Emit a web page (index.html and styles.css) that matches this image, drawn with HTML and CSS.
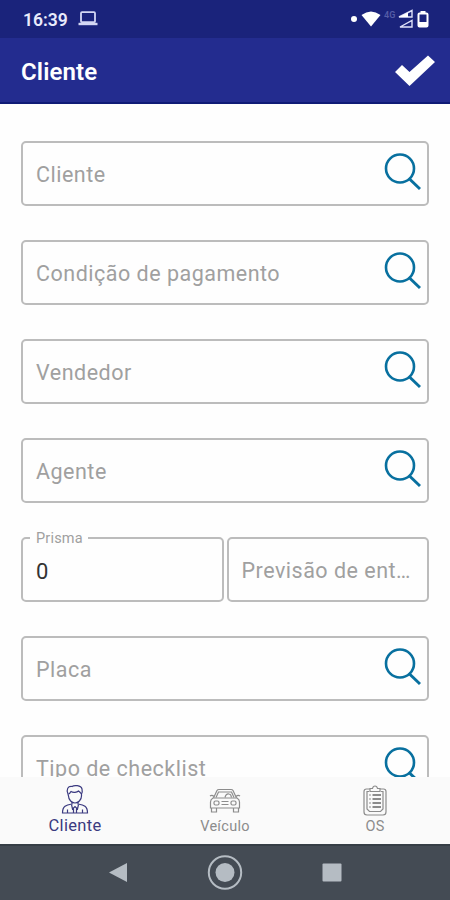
FILE: index.html
```
<!DOCTYPE html>
<html lang="pt-BR">
<head>
    <meta charset="UTF-8">
    <meta name="viewport" content="width=device-width, initial-scale=1.0">
    <title>Cliente</title>
    <link rel="stylesheet" href="styles.css">
</head>
<body>
    <svg class="symbols">
        <symbol id="search" viewBox="0 0 38 38">
            <circle cx="17" cy="15.5" r="14" fill="none" stroke="currentColor" stroke-width="2.6"/>
            <path d="M26 25.5 L37 36" stroke="currentColor" stroke-width="3"/>
        </symbol>
    </svg>

    <div class="status-bar">
        <span class="time">16:39</span>
        <svg class="laptop" width="20" height="16" viewBox="0 0 20 16">
            <rect x="3" y="1.2" width="14" height="10" rx="1" fill="none" stroke="#d3d7f4" stroke-width="1.8"/>
            <path d="M0.5 13 H19.5" stroke="#d3d7f4" stroke-width="2.4"/>
        </svg>
        <div class="signals">
            <span class="dot"></span>
            <svg class="wifi" width="20" height="16" viewBox="0 0 20 16">
                <path d="M0.5 4 Q10 -3 19.5 4 L10 15.5 Z" fill="#fff"/>
            </svg>
            <span class="network">4G</span>
            <svg class="bars" width="16" height="20" viewBox="0 0 16 20">
                <path d="M1 8 L14 1.5 V8 Z M2 18 L14 11.5 V18 Z" fill="none" stroke="#dfe2fa" stroke-width="1.4"/>
                <path d="M1 8 L10 3.5 V8 Z" fill="#fff"/>
            </svg>
            <svg class="battery" width="12" height="17" viewBox="0 0 12 17">
                <rect x="1.5" y="2.5" width="9" height="13" rx="1" fill="none" stroke="#fff" stroke-width="2"/>
                <path d="M3.5 1.2 H8.5" stroke="#fff" stroke-width="2.4"/>
                <path d="M2 13 H10" stroke="#fff" stroke-width="4"/>
            </svg>
        </div>
    </div>

    <header class="app-bar">
        <h1>Cliente</h1>
        <svg class="check" width="42" height="32" viewBox="0 0 42 32">
            <path d="M1 17 L8 10 L15.5 17 L34 0.5 L41 7 L15.5 31 Z" fill="#fff"/>
        </svg>
    </header>

    <main class="form">
        <div class="field">
            <span class="label">Cliente</span>
            <svg class="search"><use href="#search"/></svg>
        </div>
        <div class="field">
            <span class="label">Condição de pagamento</span>
            <svg class="search"><use href="#search"/></svg>
        </div>
        <div class="field">
            <span class="label">Vendedor</span>
            <svg class="search"><use href="#search"/></svg>
        </div>
        <div class="field">
            <span class="label">Agente</span>
            <svg class="search"><use href="#search"/></svg>
        </div>
        <div class="row">
            <div class="field">
                <span class="floating">Prisma</span>
                <span class="value">0</span>
            </div>
            <div class="field">
                <span class="label">Previsão de ent…</span>
            </div>
        </div>
        <div class="field">
            <span class="label">Placa</span>
            <svg class="search"><use href="#search"/></svg>
        </div>
        <div class="field">
            <span class="label">Tipo de checklist</span>
            <svg class="search"><use href="#search"/></svg>
        </div>
    </main>

    <nav class="tabs">
        <div class="tab active">
            <svg width="28" height="32" viewBox="0 0 28 32">
                <path d="M7 10 C5 5 7 2 11 2.5 C13 1 20 1 21 5 C21.5 7 21 9 20.5 10 V12 C20.5 16 17 19 14 19 C11 19 7.5 16 7.5 12 Z"/>
                <path d="M7.5 10 C9.5 9.5 9 8 10 7.5 C12 9 16 8.5 17.5 7 Q19 8 20.5 10"/>
                <path d="M11 18 V20.5 M17 18 V20.5 M11 20 C5 21 1.5 22 1.5 29 H26.5 C26.5 22 23 21 17 20 M6.5 25.5 V29 M21.5 25.5 V29"/>
                <path d="M10.5 20.5 L11.5 25 L14 22.5 L16.5 25 L17.5 20.5 M12.5 24.5 V29 M15.5 24.5 V29"/>
            </svg>
            <span>Cliente</span>
        </div>
        <div class="tab">
            <svg width="32" height="32" viewBox="0 0 32 32">
                <path d="M4.5 14 L8 6.5 Q8.5 5.5 10 5.5 H22 Q23.5 5.5 24 6.5 L27.5 14 M7 13.5 L9.5 8 H22.5 L25 13.5 M1 12 Q3 10.5 5 12.5 M27 12.5 Q29 10.5 31 12"/>
                <path d="M4 14 H28 Q30.5 15.5 30.5 18 V24 H1.5 V18 Q1.5 15.5 4 14 Z M2.5 24 V28 H7.5 V24 M24.5 24 V28 H29.5 V24"/>
                <rect x="5" y="17" width="5" height="4" rx="1.5"/>
                <rect x="22" y="17" width="5" height="4" rx="1.5"/>
                <path d="M12.5 17.5 H19.5 M12.5 20.5 H19.5 M16 13.5 Q17 9.5 20 10 Q22 10 22.5 13.5"/>
            </svg>
            <span>Veículo</span>
        </div>
        <div class="tab">
            <svg width="24" height="32" viewBox="0 0 24 32">
                <path d="M7 5 H3.5 Q1 5 1 7.5 V28 Q1 31 4 31 H20 Q23 31 23 28 V7.5 Q23 5 20.5 5 H17 M7 4.5 H9.5 Q10 2 12 2 Q14 2 14.5 4.5 H17 V7.5 H7 Z M6 7.5 H4 V25 L6.5 27.5 H17.500 L20 25 V7.5 H18"/>
                <path d="M6 11 H8 M6 15 H8 M6 19 H8 M6 23 H8"/>
                <path class="lines" d="M9.5 11 H18 M9.5 15 H18 M9.5 19 H18 M9.5 23 H18"/>
            </svg>
            <span>OS</span>
        </div>
    </nav>

    <div class="system-nav">
        <svg width="20" height="22" viewBox="0 0 20 22">
            <path d="M1 10.5 L19 1 V20 Z" fill="#b5bcc3"/>
        </svg>
        <svg width="36" height="36" viewBox="0 0 36 36">
            <circle cx="18" cy="17.5" r="16.2" fill="none" stroke="#b5bcc3" stroke-width="2"/>
            <circle cx="18" cy="17.5" r="9.5" fill="#b5bcc3"/>
        </svg>
        <svg width="20" height="20" viewBox="0 0 20 20">
            <rect x="0.5" y="0.5" width="19" height="18" rx="1" fill="#b5bcc3"/>
        </svg>
    </div>
</body>
</html>
```
FILE: styles.css
```
* {
    margin: 0;
    padding: 0;
    box-sizing: border-box;
}

body {
    width: 450px;
    height: 900px;
    display: flex;
    flex-direction: column;
    overflow: hidden;
    background: #fefefe;
    font-family: Roboto, "Liberation Sans", sans-serif;
}

svg {
    display: block;
    flex-shrink: 0;
}

.symbols {
    display: none;
}

.status-bar {
    height: 38px;
    flex-shrink: 0;
    display: flex;
    align-items: center;
    padding: 0 21px 0 23px;
    background: #1a237b;
    color: #e9ebfc;
}

.time {
    width: 55px;
    padding-top: 1px;
    font-size: 17.5px;
    font-weight: 600;
}

.signals {
    display: flex;
    align-items: center;
    margin-left: auto;
}

.dot {
    width: 6px;
    height: 6px;
    border-radius: 50%;
    background: #fff;
}

.wifi {
    margin-left: 4px;
}

.network {
    width: 12px;
    margin: -9px 2px 0 3px;
    font-size: 9px;
    font-weight: 600;
    color: #555da7;
}

.battery {
    margin-left: 3px;
}

.app-bar {
    height: 66px;
    flex-shrink: 0;
    display: flex;
    align-items: center;
    justify-content: space-between;
    padding: 0 14px 0 21px;
    background: #232c8f;
    border-bottom: 2px solid #101b76;
    color: #fff;
}

.app-bar h1 {
    padding-top: 3px;
    font-size: 24px;
    font-weight: 600;
    letter-spacing: 0.1px;
}

.check {
    margin-top: 1px;
}

.form {
    flex: 1;
    min-height: 0;
    display: flex;
    flex-direction: column;
    gap: 34px;
    padding: 37px 21px 0;
    overflow: hidden;
}

.field {
    position: relative;
    height: 65px;
    flex-shrink: 0;
    display: flex;
    align-items: center;
    justify-content: space-between;
    padding: 2px 6px 0 13px;
    border: 2px solid #bcbcbc;
    border-radius: 5px;
}

.label {
    font-size: 21.5px;
    letter-spacing: 0.5px;
    color: #a0a0a0;
    white-space: nowrap;
}

.search {
    width: 38px;
    height: 38px;
    margin-top: -5px;
    color: #08709f;
}

.row {
    display: flex;
    gap: 3px;
}

.row .field {
    flex: 1;
}

.floating {
    position: absolute;
    top: -8px;
    left: 7px;
    padding: 0 5px 0 6px;
    background: #fefefe;
    font-size: 14.5px;
    line-height: 16px;
    letter-spacing: 0.2px;
    color: #a0a0a0;
}

.value {
    padding-top: 1px;
    font-size: 22px;
    color: #333;
}

.tabs {
    height: 67px;
    flex-shrink: 0;
    display: flex;
    background: #fafafa;
}

.tab {
    flex: 1;
    display: flex;
    flex-direction: column;
    align-items: center;
    padding-top: 7px;
    font-size: 14.5px;
    line-height: 22px;
    letter-spacing: 0.3px;
    color: #8c8c8c;
}

.tab svg {
    fill: none;
    stroke: currentColor;
    stroke-width: 1.2;
}

.tab .lines {
    stroke-width: 2;
}

.tab.active {
    font-size: 16.5px;
    line-height: 20px;
    color: #3b3a80;
}

.system-nav {
    height: 56px;
    flex-shrink: 0;
    display: flex;
    align-items: center;
    justify-content: space-between;
    padding: 0 108px;
    background: #444b54;
    border-top: 2px solid #363e46;
}
```
